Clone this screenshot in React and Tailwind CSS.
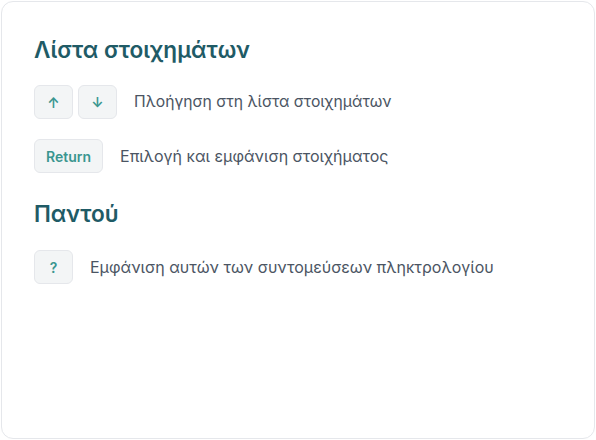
export default function App() {
  const key =
    "inline-flex h-[34px] min-w-[39px] items-center justify-center rounded-md border border-[#e5e7eb] bg-[#f3f5f6] px-[11px] font-['Inter',sans-serif] text-[14px] font-semibold text-[#3a9690]";

  return (
    <div className="h-[440px] w-[596px] bg-white p-px font-['Inter','Noto_Sans',sans-serif]">
      <div className="h-full rounded-xl border border-[#e5e7eb] bg-white px-8 pt-[32px]">
        <h2 className="text-[22.6px] font-semibold leading-8 text-[#1f5b66]">Λίστα στοιχημάτων</h2>

        <div className="mt-[19px] flex items-center">
          <div className="flex gap-[5px]">
            <kbd className={key}>↑</kbd>
            <kbd className={key}>↓</kbd>
          </div>
          <span className="ml-[17px] text-[15.7px] text-[#4b5563]">Πλοήγηση στη λίστα στοιχημάτων</span>
        </div>

        <div className="mt-[20px] flex items-center">
          <kbd className={key}>Return</kbd>
          <span className="ml-[17px] text-[16px] text-[#4b5563]">Επιλογή και εμφάνιση στοιχήματος</span>
        </div>

        <h2 className="mt-[25px] text-[22.6px] font-semibold leading-8 text-[#1f5b66]">Παντού</h2>

        <div className="mt-[20px] flex items-center">
          <kbd className={key}>?</kbd>
          <span className="ml-[17px] text-[16px] text-[#4b5563]">Εμφάνιση αυτών των συντομεύσεων πληκτρολογίου</span>
        </div>
      </div>
    </div>
  );
}
